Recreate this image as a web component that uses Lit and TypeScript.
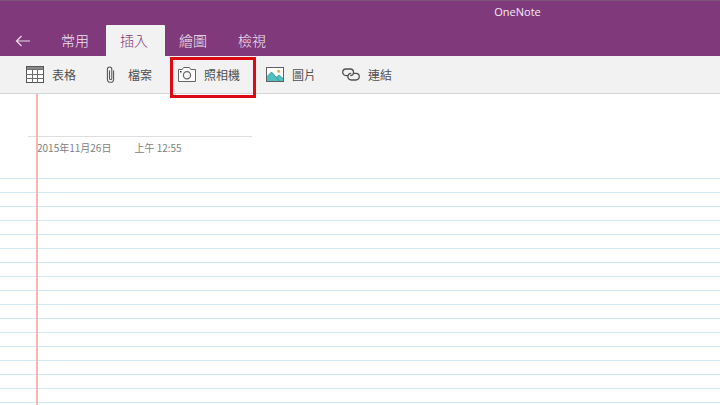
import { LitElement, html, css, svg } from "lit";
import { customElement, property, state } from "lit/decorators.js";
import { classMap } from "lit/directives/class-map.js";

const icons: Record<string, unknown> = {
  table: svg`
    <rect x="0.5" y="0.5" width="17" height="16" fill="#fff" stroke="#555"/>
    <rect x="1" y="1" width="16" height="2" fill="#8a8a8a"/>
    <path d="M0 3.5H18M0 8.5H18M0 12.5H18M6.5 3V17M11.5 3V17" fill="none" stroke="#6c6c6c"/>`,
  file: svg`
    <path d="M11.6 4.5V13.2A3.1 3.1 0 0 1 5.4 13.2V3.2A2.2 2.2 0 0 1 9.8 3.2V12.4A1.15 1.15 0 0 1 7.5 12.4V4.6" fill="none" stroke="#585858" stroke-width="1.1"/>`,
  camera: svg`
    <path d="M0.5 3.5H4.2L5.6 1.5H11.4L12.8 3.5H17.5V15.5H0.5Z" fill="#fafafa" stroke="#666"/>
    <circle cx="9" cy="9.2" r="3.6" fill="none" stroke="#666" stroke-width="1.2"/>
    <rect x="2" y="5" width="1.5" height="1.5" fill="#333"/>`,
  picture: svg`
    <rect x="0.5" y="1.5" width="17" height="14" fill="#fff" stroke="#606060"/>
    <path d="M1 10.5L5.5 6L10.5 11L13 9L17 12.5V15H1Z" fill="#4fc0bd"/>
    <path d="M1 10.5L5.5 6L13.5 15M10.3 11.2L13 9L17 12.5" fill="none" stroke="#2c9492" stroke-width="0.8"/>
    <circle cx="12.6" cy="5.2" r="1.5" fill="#f0a850"/>`,
  link: svg`
    <path d="M6 9.6H4A3.3 3.3 0 0 1 4 3H8.2A3.3 3.3 0 0 1 8.2 9.6" fill="none" stroke="#505050" stroke-width="1.3"/>
    <path d="M12 7.4H14A3.3 3.3 0 0 1 14 14H9.2A3.3 3.3 0 0 1 9.2 7.4" fill="none" stroke="#505050" stroke-width="1.3"/>`,
};

@customElement("tool-button")
class ToolButton extends LitElement {
  @property() icon = "";
  @property() label = "";
  @property({ type: Boolean }) marked = false;

  static styles = css`
    :host { display: block; position: relative; }
    button {
      display: flex; align-items: center; gap: 8px;
      padding: 0; border: 0; background: none; color: #505050;
      font: inherit; line-height: 18px; white-space: nowrap;
    }
    svg { display: block; flex: none; }
    .mark {
      position: absolute; inset: -9px -16px -14px -8px;
      border: 3px solid #dc0a12; pointer-events: none;
    }
  `;

  render() {
    return html`
      <button type="button">
        <svg width="18" height="18" viewBox="0 0 18 18" aria-hidden="true">${icons[this.icon]}</svg>
        <span>${this.label}</span>
      </button>
      ${this.marked ? html`<div class="mark"></div>` : ""}
    `;
  }
}

@customElement("app-root")
class AppRoot extends LitElement {
  @state() private active = "插入";

  private tabs = ["常用", "插入", "繪圖", "檢視"];
  private tools = [
    { icon: "table", label: "表格" },
    { icon: "file", label: "檔案" },
    { icon: "camera", label: "照相機", marked: true },
    { icon: "picture", label: "圖片" },
    { icon: "link", label: "連結" },
  ];

  static styles = css`
    :host {
      display: flex; flex-direction: column; min-height: 100vh;
      background: #fff; color: #444;
      font-family: "Noto Sans CJK TC", sans-serif; font-size: 12px;
    }
    header { background: #80397b; border-top: 1px solid #7b5579; }
    h1 {
      margin: 0 0 0 315px; height: 24px; line-height: 22px;
      text-align: center; color: #f6eaf5;
      font-family: "Open Sans", sans-serif; font-size: 11px; font-weight: 400;
    }
    nav { display: flex; height: 31px; }
    .back {
      width: 47px; padding: 0 0 0 15px; border: 0; background: none;
      display: flex; align-items: center;
    }
    .tab {
      border: 0; border-radius: 1px 1px 0 0; background: none;
      padding: 0 17px 0 14px; line-height: 31px; color: #f2e6f1;
      font-family: inherit; font-size: 14px; font-weight: 300;
    }
    .tab.active { background: #f2f2f2; color: #80397b; }
    .tools {
      display: flex; align-items: center; gap: 26px;
      height: 37px; padding: 0 26px;
      background: #f2f2f2; border-bottom: 1px solid #d4d4d4;
    }
    main {
      flex: 1; display: flex; flex-direction: column; position: relative;
    }
    .margin {
      position: absolute; top: 0; bottom: 0; left: 36px; width: 2px;
      background: #f9b4b6;
    }
    .title {
      margin: 8px 0 0 28px; width: 224px; height: 35px; padding: 0 9px;
      box-sizing: border-box; border: 0; border-bottom: 1px solid #dedede;
      background: none; outline: 0; font: inherit; font-size: 18px;
    }
    .stamp {
      display: flex; gap: 23px; padding: 3px 37px 0; height: 38px;
      font-size: 10px; line-height: 16px; color: #808080;
    }
    .rules {
      flex: 1;
      background: repeating-linear-gradient(#cfe8f2 0 1px, #fff 1px 14px);
    }
  `;

  render() {
    return html`
      <header>
        <h1>OneNote</h1>
        <nav>
          <button class="back" type="button" aria-label="返回">
            <svg width="16" height="12" viewBox="0 0 16 12" aria-hidden="true">
              <path d="M15 6H1.5M6.5 1L1.5 6L6.5 11" fill="none" stroke="#eadcea" stroke-width="1.2"/>
            </svg>
          </button>
          ${this.tabs.map((t) => html`
            <button type="button"
              class=${classMap({ tab: true, active: t === this.active })}
              @click=${() => (this.active = t)}>${t}</button>`)}
        </nav>
      </header>
      <div class="tools">
        ${this.tools.map((t) => html`
          <tool-button .icon=${t.icon} .label=${t.label} .marked=${!!t.marked}></tool-button>`)}
      </div>
      <main>
        <input class="title" type="text" aria-label="標題">
        <div class="stamp"><span>2015年11月26日</span><span>上午 12:55</span></div>
        <div class="rules"></div>
        <div class="margin"></div>
      </main>
    `;
  }
}
